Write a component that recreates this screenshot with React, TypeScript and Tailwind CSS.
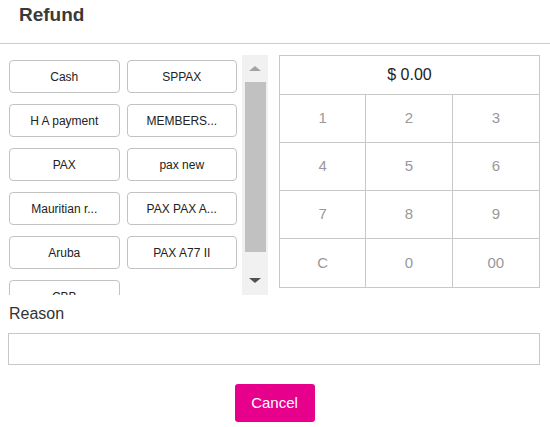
import React from "react";

const methods = [
  "Cash",
  "SPPAX",
  "H A payment",
  "MEMBERS...",
  "PAX",
  "pax new",
  "Mauritian r...",
  "PAX PAX A...",
  "Aruba",
  "PAX A77 II",
  "CBB",
];

const keys = ["1", "2", "3", "4", "5", "6", "7", "8", "9", "C", "0", "00"];

export default function App() {
  return (
    <div className="w-[550px] h-[427px] bg-white overflow-hidden font-['Liberation_Sans',Arial,sans-serif]">
      <div className="h-[44px] border-b border-[#cccccc] pl-[19px] pt-[4px]">
        <div className="text-[19px] leading-[22px] font-bold text-[#3a3a3a]">Refund</div>
      </div>
      <div className="flex mt-[11px] h-[240px]">
        <div className="ml-[9px] w-[228px] h-[240px] overflow-hidden pt-[5px]">
          <div className="grid grid-cols-2 gap-x-[7px] gap-y-[11px]">
            {methods.map((m) => (
              <div
                key={m}
                className="h-[33px] border border-[#c2c2c2] rounded-[4px] bg-white flex items-center justify-center text-[12px] text-[#222222] whitespace-nowrap"
              >
                {m}
              </div>
            ))}
          </div>
        </div>
        <div className="ml-[5px] w-[26px] h-[240px] bg-[#f1f1f1] flex flex-col items-center">
          <div className="h-[27px] flex items-center justify-center">
            <div className="w-0 h-0 border-l-[6px] border-r-[6px] border-b-[5px] border-l-transparent border-r-transparent border-b-[#a3a3a3]" />
          </div>
          <div className="w-[21px] h-[170px] bg-[#c1c1c1]" />
          <div className="flex-1 flex items-center justify-center pt-[14px]">
            <div className="w-0 h-0 border-l-[6px] border-r-[6px] border-t-[5px] border-l-transparent border-r-transparent border-t-[#505050]" />
          </div>
        </div>
        <div className="ml-[11px] w-[261px] h-[233px] border border-[#c8c8c8] flex flex-col">
          <div className="h-[39px] border-b border-[#c8c8c8] flex items-center justify-center text-[16px] text-[#222222]">
            $ 0.00
          </div>
          <div className="flex-1 grid grid-cols-3 grid-rows-4">
            {keys.map((k, i) => (
              <div
                key={k}
                className={`flex items-center justify-center text-[15px] text-[#999999] ${
                  i % 3 !== 2 ? "border-r border-[#c8c8c8]" : ""
                } ${i < 9 ? "border-b border-[#c8c8c8]" : ""}`}
              >
                {k}
              </div>
            ))}
          </div>
        </div>
      </div>
      <div className="ml-[9px] mt-[10px] text-[16px] leading-[18px] text-[#333333]">Reason</div>
      <div className="ml-[8px] mt-[10px] w-[532px] h-[32px] border border-[#c8c8c8] bg-white" />
      <div className="flex justify-center mt-[19px]">
        <div className="ml-[-1px] w-[80px] h-[38px] rounded-[3px] bg-[#e6008c] text-white text-[15px] flex items-center justify-center">
          Cancel
        </div>
      </div>
    </div>
  );
}
